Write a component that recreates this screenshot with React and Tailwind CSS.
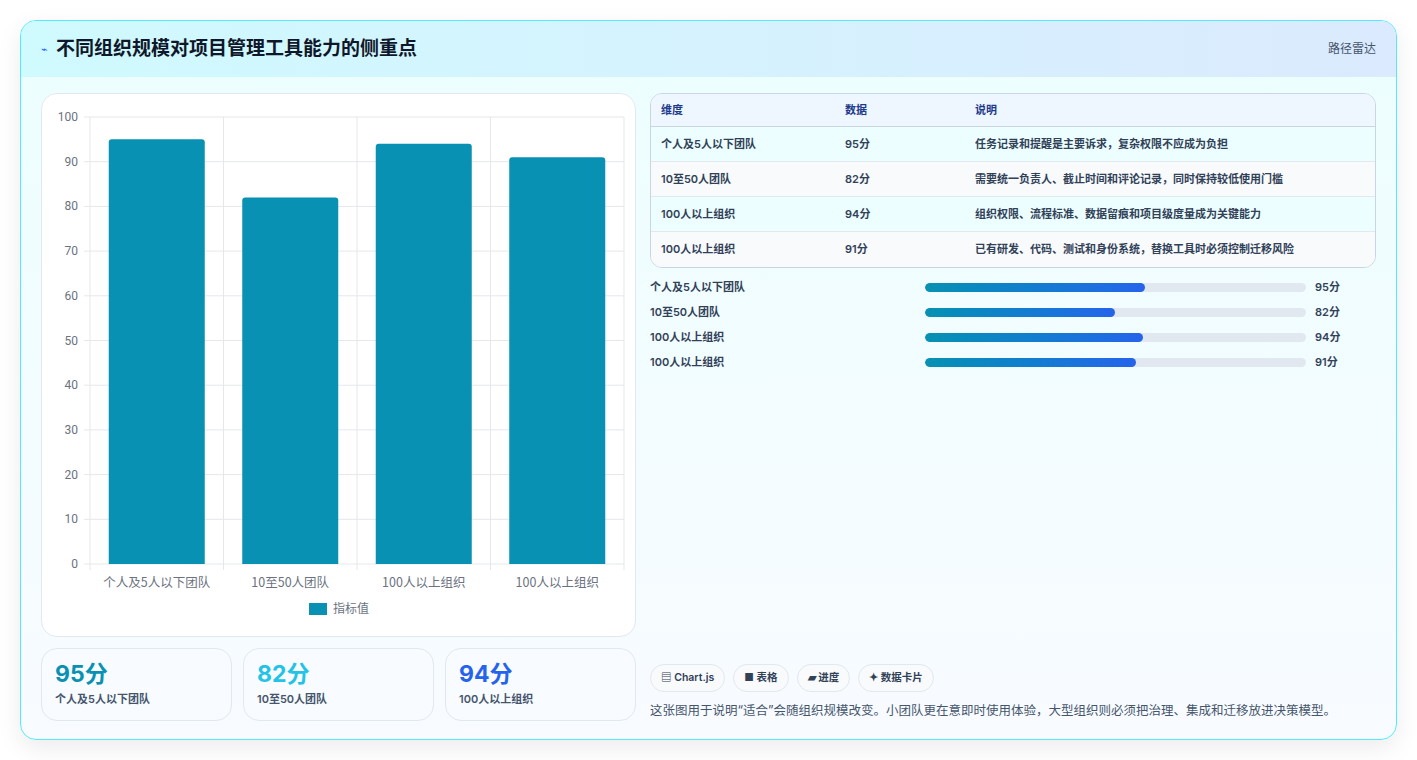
import React from "react";

const data = [
  ["个人及5人以下团队", 95, "任务记录和提醒是主要诉求，复杂权限不应成为负担", 220],
  ["10至50人团队", 82, "需要统一负责人、截止时间和评论记录，同时保持较低使用门槛", 190],
  ["100人以上组织", 94, "组织权限、流程标准、数据留痕和项目级度量成为关键能力", 218],
  ["100人以上组织", 91, "已有研发、代码、测试和身份系统，替换工具时必须控制迁移风险", 211],
];

function Chart() {
  const x0 = 48, x1 = 582, y0 = 23, y1 = 470;
  const h = y1 - y0;
  const cw = (x1 - x0) / 4;
  return (
    <svg width="595" height="544" className="block" style={{ fontFamily: "Roboto, 'Liberation Sans', sans-serif" }}>
      {[0, 10, 20, 30, 40, 50, 60, 70, 80, 90, 100].map((v) => {
        const y = y1 - (v / 100) * h;
        return (
          <g key={v}>
            <line x1={x0 - 6} x2={x1} y1={y} y2={y} stroke="#e5e7eb" />
            <text x={x0 - 12} y={y + 4} textAnchor="end" fontSize="12" fill="#6b7280">{v}</text>
          </g>
        );
      })}
      {[0, 1, 2, 3, 4].map((i) => (
        <line key={i} x1={x0 + i * cw} x2={x0 + i * cw} y1={y0} y2={y1 + 6} stroke="#e5e7eb" />
      ))}
      {data.map((d, i) => {
        const bw = 96;
        const bx = x0 + i * cw + (cw - bw) / 2;
        const by = y1 - (d[1] / 100) * h;
        return (
          <g key={i}>
            <path d={`M${bx} ${y1} V${by + 3} Q${bx} ${by} ${bx + 3} ${by} H${bx + bw - 3} Q${bx + bw} ${by} ${bx + bw} ${by + 3} V${y1} Z`} fill="#0891b2" />
            <text x={x0 + i * cw + cw / 2} y={y1 + 23} textAnchor="middle" fontSize="12.5" fill="#6b7280" style={{ fontFamily: "'Noto Sans CJK SC', sans-serif" }}>{d[0]}</text>
          </g>
        );
      })}
      <rect x="267" y="509" width="18" height="12" fill="#0891b2" />
      <text x="291" y="519" fontSize="12" fill="#6b7280" style={{ fontFamily: "'Noto Sans CJK SC', sans-serif" }}>指标值</text>
    </svg>
  );
}

export default function App() {
  const font = { fontFamily: "Inter, 'Noto Sans CJK SC', sans-serif" };
  return (
    <div className="w-[1417px] h-[760px] bg-white p-5" style={font}>
      <div className="h-[720px] rounded-2xl border border-cyan-300 shadow-[0_8px_24px_rgba(0,0,0,0.08)] bg-gradient-to-b from-[#ecfeff] to-[#f8fbff] overflow-hidden flex flex-col">
        <div className="h-[56px] shrink-0 flex items-center justify-between px-5 bg-gradient-to-r from-[#cffafe] to-[#dbeafe]">
          <div className="flex items-center gap-2">
            <span className="text-[11px] text-blue-600">⌁</span>
            <h1 className="text-[19px] font-bold text-[#0f172a]">不同组织规模对项目管理工具能力的侧重点</h1>
          </div>
          <span className="text-[12px] text-slate-600">路径雷达</span>
        </div>
        <div className="flex gap-[14px] px-5 pt-4">
          <div className="w-[595px] flex flex-col gap-[11px]">
            <div className="h-[544px] bg-white rounded-2xl border border-slate-200">
              <Chart />
            </div>
            <div className="grid grid-cols-3 gap-[11px]">
              {[["95分", "text-[#0891b2]", data[0][0]], ["82分", "text-[#22c3e6]", data[1][0]], ["94分", "text-[#2563eb]", data[2][0]]].map((s, i) => (
                <div key={i} className="h-[73px] rounded-2xl border border-slate-200 bg-[#f8fbff] px-[13px] pt-[10px]">
                  <div className={`text-[23px] font-bold leading-[30px] ${s[1]}`}>{s[0]}</div>
                  <div className="text-[11px] font-semibold text-slate-600 mt-[2px]">{s[2]}</div>
                </div>
              ))}
            </div>
          </div>
          <div className="flex-1 flex flex-col">
            <div className="rounded-xl border border-slate-300 overflow-hidden text-[11px] font-semibold">
              <div className="grid grid-cols-[184px_130px_1fr] h-[33px] items-center px-[10px] bg-[#eef6ff] text-[#1e3a8a] border-b border-slate-300">
                <div>维度</div><div>数据</div><div>说明</div>
              </div>
              {data.map((d, i) => (
                <div key={i} className={`grid grid-cols-[184px_130px_1fr] h-[35px] items-center px-[10px] text-slate-700 ${i % 2 ? "bg-[#f8fafc]" : "bg-[#ecfeff]"} ${i < 3 ? "border-b border-slate-200" : ""}`}>
                  <div>{d[0]}</div><div>{d[1]}分</div><div>{d[2]}</div>
                </div>
              ))}
            </div>
            <div className="flex flex-col gap-[10px] mt-[12px]">
              {data.map((d, i) => (
                <div key={i} className="flex items-center h-[15px] text-[11px] font-semibold text-slate-700">
                  <div className="w-[275px]">{d[0]}</div>
                  <div className="w-[381px] h-[9px] rounded-full bg-slate-200 overflow-hidden">
                    <div className="h-full rounded-full bg-gradient-to-r from-[#0891b2] to-[#2563eb]" style={{ width: d[3] }} />
                  </div>
                  <div className="ml-[9px]">{d[1]}分</div>
                </div>
              ))}
            </div>
            <div className="flex-1" />
            <div className="flex gap-2 mt-[294px]">
              {["▤ Chart.js", "■ 表格", "▰ 进度", "✦ 数据卡片"].map((t) => (
                <span key={t} className="h-[28px] px-[10px] flex items-center rounded-full border border-slate-200 bg-[#f8fafc] text-[10.5px] font-semibold text-slate-700">{t}</span>
              ))}
            </div>
            <p className="mt-[10px] text-[12.5px] text-slate-600">这张图用于说明“适合”会随组织规模改变。小团队更在意即时使用体验，大型组织则必须把治理、集成和迁移放进决策模型。</p>
          </div>
        </div>
      </div>
    </div>
  );
}
